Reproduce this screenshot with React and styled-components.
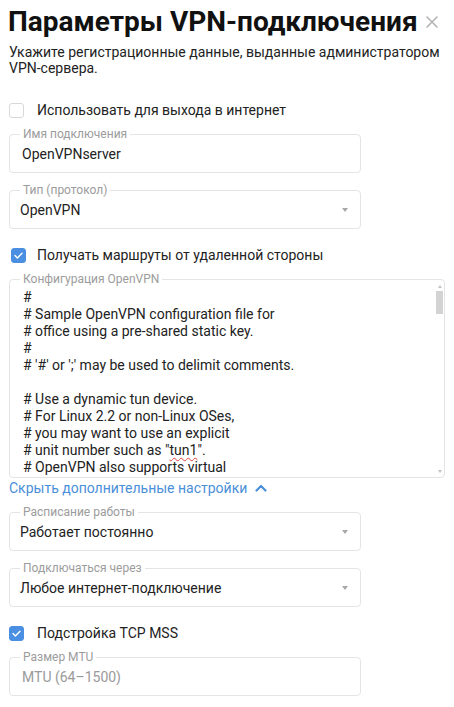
import React from 'react';
import styled, { createGlobalStyle } from 'styled-components';

const Global = createGlobalStyle`
  html, body { margin: 0; padding: 0; background: #fff; }
  body {
    font-family: Roboto, "Noto Sans", "Liberation Sans", Arial, sans-serif;
    color: #222;
  }
  * { box-sizing: border-box; }
`;

const Page = styled.div`
  width: 454px;
  padding: 6px 9px 12px 9px;
  display: flex;
  flex-direction: column;
  align-items: flex-start;
`;

const Header = styled.div`
  align-self: stretch;
  display: flex;
  align-items: center;
  justify-content: space-between;
  height: 32px;
  padding-right: 7px;
`;

const Title = styled.h1`
  margin: 0 0 0 -1px;
  font-size: 28px;
  line-height: 32px;
  font-weight: 700;
  color: #111;
`;

const CloseButton = styled.button`
  width: 12px;
  height: 12px;
  padding: 0;
  border: 0;
  background: none;
  display: flex;
  align-items: center;
  justify-content: center;
  cursor: pointer;
`;

const Subtitle = styled.p`
  margin: 6px 0 0 0;
  font-size: 14px;
  line-height: 16px;
  color: #222;
`;

const CheckRow = styled.label`
  display: flex;
  align-items: center;
  gap: ${p => 13 - p.$indent}px;
  height: 20px;
  margin-top: ${p => p.$mt}px;
  padding-left: ${p => p.$indent}px;
  font-size: 14px;
  line-height: 16px;
  color: #222;
  cursor: pointer;
`;

const Box = styled.span`
  width: 15px;
  height: 15px;
  border-radius: 3px;
  display: flex;
  align-items: center;
  justify-content: center;
  background: ${p => (p.$checked ? '#4a8fe1' : '#fff')};
  border: 1px solid ${p => (p.$checked ? '#4a8fe1' : '#d8d8d8')};
  flex: none;
`;

const Field = styled.div`
  position: relative;
  width: ${p => p.$w || 352}px;
  height: ${p => p.$h || 39}px;
  margin-top: ${p => p.$mt}px;
  border: 1px solid #e4e4e4;
  border-radius: 4px;
  display: flex;
  align-items: center;
  padding-left: ${p => (p.$select ? 10 : 12)}px;
  padding-right: 12px;
`;

const FieldLabel = styled.span`
  position: absolute;
  top: -8px;
  left: 10px;
  padding: 0 3px;
  background: #fff;
  font-size: 12px;
  line-height: 14px;
  color: #9c9c9c;
  white-space: nowrap;
  z-index: 1;
`;

const Value = styled.span`
  flex: 1;
  font-size: 14px;
  line-height: 16px;
  color: ${p => (p.$placeholder ? '#9a9a9a' : '#222')};
  white-space: nowrap;
`;

const Caret = styled.span`
  width: 0;
  height: 0;
  border-left: 3.5px solid transparent;
  border-right: 3.5px solid transparent;
  border-top: 4px solid #a8a8a8;
`;

const CodeArea = styled.div`
  align-self: stretch;
  flex: 1;
  margin-left: -11px;
  margin-right: -12px;
  padding: 9px 12px 0 12px;
  overflow: hidden;
  font-size: 14px;
  line-height: 17px;
  color: #222;
  white-space: pre;
`;

const Misspelled = styled.span`
  text-decoration: underline wavy #e0403a;
  text-decoration-thickness: 1px;
  text-underline-offset: 2px;
`;

const ScrollTrack = styled.div`
  position: absolute;
  top: 0;
  right: 0;
  bottom: 0;
  width: 9px;
  display: flex;
  flex-direction: column;
  align-items: center;
  padding: 5px 0 4px;
`;

const ScrollArrow = styled.span`
  width: 0;
  height: 0;
  border-left: 2.5px solid transparent;
  border-right: 2.5px solid transparent;
  ${p => (p.$down ? 'border-top: 3px solid #c2c2c2;' : 'border-bottom: 3px solid #c2c2c2;')}
  margin-top: ${p => (p.$down ? 'auto' : '0')};
`;

const ScrollThumb = styled.span`
  width: 7px;
  height: 23px;
  margin-top: 3px;
  background: #d3d3d3;
`;

const Toggle = styled.button`
  margin-top: 2px;
  display: inline-flex;
  align-items: center;
  gap: 8px;
  padding: 0;
  border: 0;
  background: none;
  font-family: inherit;
  font-size: 14px;
  line-height: 16px;
  color: #4a8fd9;
  cursor: pointer;
`;

const Check = () => (
  <svg width="11" height="9" viewBox="0 0 11 9">
    <path d="M2 4.6 L4.4 7 L9 2.2" fill="none" stroke="#fff" strokeWidth="1.4" strokeLinecap="round" strokeLinejoin="round" />
  </svg>
);

const Checkbox = ({ checked, children, mt, indent = 0 }) => (
  <CheckRow $mt={mt} $indent={indent}>
    <Box $checked={checked}>{checked && <Check />}</Box>
    {children}
  </CheckRow>
);

const configLines = [
  '#',
  '# Sample OpenVPN configuration file for',
  '# office using a pre-shared static key.',
  '#',
  "# '#' or ';' may be used to delimit comments.",
  '',
  '# Use a dynamic tun device.',
  '# For Linux 2.2 or non-Linux OSes,',
  '# you may want to use an explicit',
  null,
  '# OpenVPN also supports virtual',
];

export default function App() {
  return (
    <>
      <Global />
      <Page>
        <Header>
          <Title>Параметры VPN-подключения</Title>
          <CloseButton aria-label="Закрыть">
            <svg width="12" height="12" viewBox="0 0 12 12">
              <path d="M1 1 L11 11 M11 1 L1 11" stroke="#b3b3b3" strokeWidth="1.6" strokeLinecap="round" />
            </svg>
          </CloseButton>
        </Header>
        <Subtitle>
          Укажите регистрационные данные, выданные администратором
          <br />
          VPN-сервера.
        </Subtitle>

        <Checkbox mt={24}>Использовать для выхода в интернет</Checkbox>

        <Field $mt={14}>
          <FieldLabel>Имя подключения</FieldLabel>
          <Value>OpenVPNserver</Value>
        </Field>

        <Field $mt={17} $select>
          <FieldLabel>Тип (протокол)</FieldLabel>
          <Value>OpenVPN</Value>
          <Caret />
        </Field>

        <Checkbox checked mt={16} indent={2}>Получать маршруты от удаленной стороны</Checkbox>

        <Field $mt={14} $w={436} $h={199}>
          <FieldLabel>Конфигурация OpenVPN</FieldLabel>
          <CodeArea>
            {configLines.map((l, i) =>
              l === null ? (
                <div key={i}># unit number such as "<Misspelled>tun1</Misspelled>".</div>
              ) : (
                <div key={i}>{l === '' ? '\u00a0' : l}</div>
              )
            )}
          </CodeArea>
          <ScrollTrack>
            <ScrollArrow />
            <ScrollThumb />
            <ScrollArrow $down />
          </ScrollTrack>
        </Field>

        <Toggle>
          Скрыть дополнительные настройки
          <svg width="12" height="8" viewBox="0 0 12 8">
            <path d="M1.5 6.5 L6 2 L10.5 6.5" fill="none" stroke="#4a8fd9" strokeWidth="2.2" strokeLinecap="round" strokeLinejoin="round" />
          </svg>
        </Toggle>

        <Field $mt={16} $select>
          <FieldLabel>Расписание работы</FieldLabel>
          <Value>Работает постоянно</Value>
          <Caret />
        </Field>

        <Field $mt={17} $select>
          <FieldLabel>Подключаться через</FieldLabel>
          <Value>Любое интернет-подключение</Value>
          <Caret />
        </Field>

        <Checkbox checked mt={16}>Подстройка TCP MSS</Checkbox>

        <Field $mt={14}>
          <FieldLabel>Размер MTU</FieldLabel>
          <Value $placeholder>MTU (64–1500)</Value>
        </Field>
      </Page>
    </>
  );
}
